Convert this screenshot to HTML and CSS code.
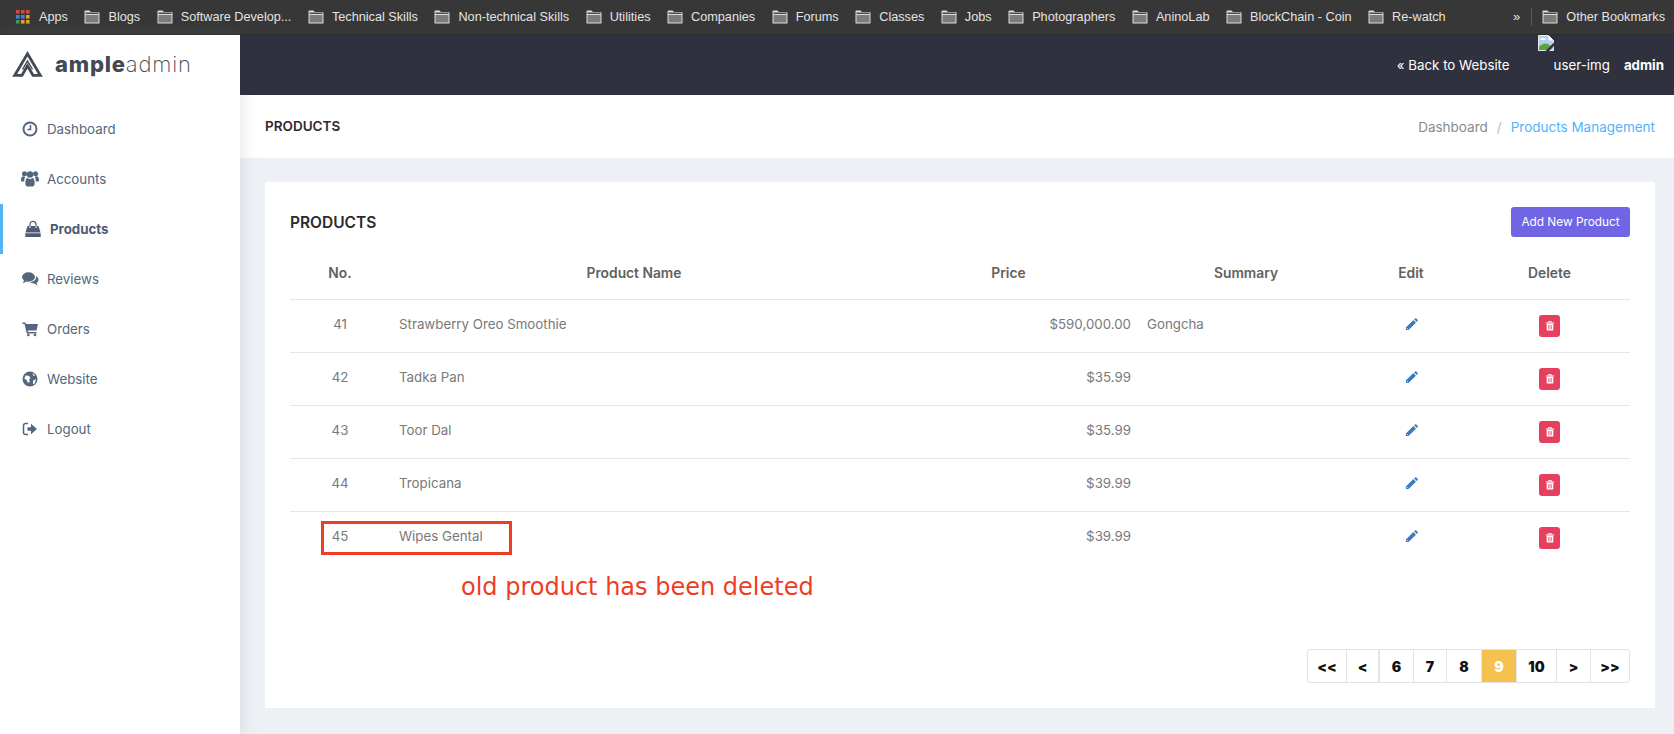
FILE: index.html
```html
<!DOCTYPE html>
<html lang="en">
<head>
  <meta charset="UTF-8">
  <title>Products Management</title>
  <link rel="stylesheet" href="styles.css">
</head>
<body>
  <svg class="sprites" width="0" height="0">
    <symbol id="folder" viewBox="0 0 16 14">
      <path d="M.5 13V1.5a1 1 0 0 1 1-1h4l1.5 1.5h7.500a1 1 0 0 1 1 1V13a.5.5 0 0 1-.5.5H1a.5.5 0 0 1-.5-.5z" fill="#dcdcdc"/>
      <rect x="1.500" y="5" width="13" height="7.500" fill="#7c7c7c"/>
      <rect x="1.500" y="2.500" width="13" height="1.500" fill="#4a4a4a"/>
    </symbol>
    <symbol id="pencil" viewBox="0 0 14 14">
      <path d="M1 10.200 9 2.200l2.800 2.800-8 8H1z" fill="currentColor"/>
      <path d="M9.800 1.400l.9-.9a1 1 0 0 1 1.400 0l1.400 1.400a1 1 0 0 1 0 1.400l-.9.900z" fill="currentColor"/>
      <path d="M2 10.800l1.200 1.200" stroke="#fff" stroke-width=".8"/>
    </symbol>
    <symbol id="trash" viewBox="0 0 12 13">
      <path d="M1 3h10v1H1zM4 3V1.600A.6.600 0 0 1 4.600 1h2.800a.6.600 0 0 1 .6.600V3H7V2H5v1z" fill="currentColor"/>
      <path d="M2 4.500h8V11.500a1 1 0 0 1-1 1H3a1 1 0 0 1-1-1z" fill="currentColor"/>
      <path d="M4.300 6v5M6 6v5M7.700 6v5" stroke="#e5405e" stroke-width=".8"/>
    </symbol>
  </svg>

  <div class="bookmarks">
    <a class="bm">
      <svg class="bm-apps" width="14" height="14" viewBox="0 0 14 14">
        <rect x="0" y="0" width="3.600" height="3.600" fill="#d9453a"/><rect x="5" y="0" width="3.600" height="3.600" fill="#d9453a"/><rect x="10" y="0" width="3.600" height="3.600" fill="#d9453a"/>
        <rect x="0" y="5" width="3.600" height="3.600" fill="#4a7fd8"/><rect x="5" y="5" width="3.600" height="3.600" fill="#4a7fd8"/><rect x="10" y="5" width="3.600" height="3.600" fill="#e0a030"/>
        <rect x="0" y="10" width="3.600" height="3.600" fill="#3f9a55"/><rect x="5" y="10" width="3.600" height="3.600" fill="#e0a030"/><rect x="10" y="10" width="3.600" height="3.600" fill="#e0a030"/>
      </svg>
      Apps
    </a>
    <a class="bm"><svg class="bm-folder"><use href="#folder"/></svg>Blogs</a>
    <a class="bm"><svg class="bm-folder"><use href="#folder"/></svg>Software Develop...</a>
    <a class="bm"><svg class="bm-folder"><use href="#folder"/></svg>Technical Skills</a>
    <a class="bm"><svg class="bm-folder"><use href="#folder"/></svg>Non-technical Skills</a>
    <a class="bm"><svg class="bm-folder"><use href="#folder"/></svg>Utilities</a>
    <a class="bm"><svg class="bm-folder"><use href="#folder"/></svg>Companies</a>
    <a class="bm"><svg class="bm-folder"><use href="#folder"/></svg>Forums</a>
    <a class="bm"><svg class="bm-folder"><use href="#folder"/></svg>Classes</a>
    <a class="bm"><svg class="bm-folder"><use href="#folder"/></svg>Jobs</a>
    <a class="bm"><svg class="bm-folder"><use href="#folder"/></svg>Photographers</a>
    <a class="bm"><svg class="bm-folder"><use href="#folder"/></svg>AninoLab</a>
    <a class="bm"><svg class="bm-folder"><use href="#folder"/></svg>BlockChain - Coin</a>
    <a class="bm"><svg class="bm-folder"><use href="#folder"/></svg>Re-watch</a>
    <span class="bm-more">»</span>
    <span class="bm-divider"></span>
    <a class="bm"><svg class="bm-folder"><use href="#folder"/></svg>Other Bookmarks</a>
  </div>

  <div class="layout">
    <aside class="sidebar">
      <div class="logo">
        <svg class="logo-mark" width="31" height="26" viewBox="0 0 31 26">
          <path d="M10 24.300H2.700L15.500 2.800l12.800 21.500H21l-5.500-9.500z" fill="none" stroke="#434a54" stroke-width="2.800" stroke-linejoin="miter"/>
          <path d="M10.500 18.500 15.500 10l5 8.500" fill="none" stroke="#434a54" stroke-width="1.400"/>
        </svg>
        <span class="logo-text"><b>ample</b>admin</span>
      </div>
      <nav class="nav">
        <a class="nav-item">
          <svg class="nav-icon" viewBox="0 0 18 18"><circle cx="9" cy="9" r="6.500" fill="none" stroke="currentColor" stroke-width="2"/><path d="M9.500 5v4.500H6.500" fill="none" stroke="currentColor" stroke-width="1.500"/></svg>
          Dashboard
        </a>
        <a class="nav-item">
          <svg class="nav-icon" viewBox="0 0 18 18"><circle cx="3.500" cy="3.800" r="2.500" fill="currentColor"/><circle cx="14.500" cy="3.800" r="2.500" fill="currentColor"/><circle cx="9" cy="4.500" r="3.200" fill="currentColor"/><path d="M0 10c0-2.500 1-3.700 2.500-3.700.7 0 1.200.2 1.700.6-.7 1.100-1 2.600-1 4.600H1c-.6 0-1-.5-1-1.500zM18 10c0-2.500-1-3.700-2.500-3.700-.7 0-1.200.2-1.700.6.700 1.100 1 2.600 1 4.600H17c.6 0 1-.5 1-1.500zM4.300 13.500c0-3.500 1-5.500 2.200-5.500 1.500 1.200 3.500 1.200 5 0 1.200 0 2.200 2 2.200 5.500 0 1.500-.8 3-2.200 3h-5c-1.400 0-2.200-1.500-2.200-3z" fill="currentColor"/></svg>
          Accounts
        </a>
        <a class="nav-item is-active">
          <svg class="nav-icon" viewBox="0 0 18 18"><path d="M3.500 6h11l2 6.500h-15zM1.300 13.300h15.400V17H1.300z" fill="currentColor"/><path d="M6 8V4.300a3 3 0 0 1 6 0V8" fill="none" stroke="currentColor" stroke-width="1.200"/><path d="M6 6.300V8M12 6.300V8" stroke="#fff" stroke-width="1.200"/></svg>
          Products
        </a>
        <a class="nav-item">
          <svg class="nav-icon" viewBox="0 0 18 18"><ellipse cx="7.500" cy="7" rx="6.500" ry="4.700" fill="currentColor"/><path d="M3 10 2 13.500l4-2.500z" fill="currentColor"/><path d="M15 6c1.500 1 2.500 2.200 2.500 3.700 0 1.300-.7 2.400-2 3.200l1.300 2.600-4-2.200c-1.500 0-3-.4-4-1.300 3.800 0 7-2.600 6.200-6z" fill="currentColor"/></svg>
          Reviews
        </a>
        <a class="nav-item">
          <svg class="nav-icon" viewBox="0 0 18 18"><path d="M1.500 2.500h3l.5 1.500h12l-1.500 6.500H6.800l.4 1.500h8.300v1.500H5.800L3.500 4H1.500z" fill="currentColor"/><circle cx="7.300" cy="15" r="1.300" fill="currentColor"/><circle cx="14" cy="15" r="1.300" fill="currentColor"/></svg>
          Orders
        </a>
        <a class="nav-item">
          <svg class="nav-icon" viewBox="0 0 18 18"><circle cx="9" cy="9" r="7.500" fill="currentColor"/><path d="M4.800 5.200 8 6l1.500 2-1.300 1.500.5 2.500-1.800.8L5.500 10 3.300 8.500zM11.500 2.800l2.700 2.400-1.700.8zM12 10.500l3-1.300-1 3.800-2 1.500z" fill="#fff"/></svg>
          Website
        </a>
        <a class="nav-item">
          <svg class="nav-icon" viewBox="0 0 18 18"><path d="M7 3.500H4.500A2 2 0 0 0 2.500 5.500v7a2 2 0 0 0 2 2H7" fill="none" stroke="currentColor" stroke-width="1.500"/><path d="M6.500 7.200H10V3.800l6 5.200-6 5.200v-3.400H6.500z" fill="currentColor"/></svg>
          Logout
        </a>
      </nav>
    </aside>

    <div class="main">
      <header class="topbar">
        <a class="topbar-link">« Back to Website</a>
        <span class="user">
          <svg class="broken-img" width="16" height="16" viewBox="0 0 16 16">
            <path d="M.5.500h10l5 5v10H.5z" fill="#b5cff2" stroke="#e8e8e8"/>
            <path d="M2 4.500c0-1 1-1.500 2-1 .5-1 2.500-1 3 .2.800 0 1 1 .5 1.300H3c-.6 0-1-.2-1-.5z" fill="#fff"/>
            <path d="M1 15v-3c2-3 6-4.500 9-3l3 2-3 4z" fill="#5fa33c"/>
            <path d="M10.500.500v5h5z" fill="#fff"/>
            <path d="M7.500 16 16 7.500V11l-5 5z" fill="#2f323e"/>
          </svg>
          <span class="user-alt">user-img</span>
          <b class="user-name">admin</b>
        </span>
      </header>

      <div class="pagebar">
        <h4 class="pagebar-title">PRODUCTS</h4>
        <div class="crumbs">
          <a class="crumb">Dashboard</a>
          <span class="crumb-sep">/</span>
          <a class="crumb crumb-current">Products Management</a>
        </div>
      </div>

      <div class="content">
        <section class="card">
          <div class="card-head">
            <h3 class="card-title">PRODUCTS</h3>
            <button class="btn-add">Add New Product</button>
          </div>
          <table class="products">
            <thead>
              <tr>
                <th class="col-no">No.</th>
                <th class="col-name">Product Name</th>
                <th class="col-price">Price</th>
                <th class="col-summary">Summary</th>
                <th class="col-edit">Edit</th>
                <th class="col-delete">Delete</th>
              </tr>
            </thead>
            <tbody>
              <tr>
                <td class="num">41</td><td class="name">Strawberry Oreo Smoothie</td><td class="price">$590,000.00</td><td>Gongcha</td>
                <td class="act"><svg class="edit-icon"><use href="#pencil"/></svg></td>
                <td class="act"><a class="btn-del"><svg class="del-icon"><use href="#trash"/></svg></a></td>
              </tr>
              <tr>
                <td class="num">42</td><td class="name">Tadka Pan</td><td class="price">$35.99</td><td></td>
                <td class="act"><svg class="edit-icon"><use href="#pencil"/></svg></td>
                <td class="act"><a class="btn-del"><svg class="del-icon"><use href="#trash"/></svg></a></td>
              </tr>
              <tr>
                <td class="num">43</td><td class="name">Toor Dal</td><td class="price">$35.99</td><td></td>
                <td class="act"><svg class="edit-icon"><use href="#pencil"/></svg></td>
                <td class="act"><a class="btn-del"><svg class="del-icon"><use href="#trash"/></svg></a></td>
              </tr>
              <tr>
                <td class="num">44</td><td class="name">Tropicana</td><td class="price">$39.99</td><td></td>
                <td class="act"><svg class="edit-icon"><use href="#pencil"/></svg></td>
                <td class="act"><a class="btn-del"><svg class="del-icon"><use href="#trash"/></svg></a></td>
              </tr>
              <tr>
                <td class="num">45</td><td class="name">Wipes Gental</td><td class="price">$39.99</td><td></td>
                <td class="act"><svg class="edit-icon"><use href="#pencil"/></svg></td>
                <td class="act"><a class="btn-del"><svg class="del-icon"><use href="#trash"/></svg></a></td>
              </tr>
            </tbody>
          </table>

          <div class="mark-box"></div>
          <div class="mark-note">old product has been deleted</div>

          <div class="pager">
            <a class="page w-39">&lt;&lt;</a>
            <a class="page w-33 page-gap">&lt;</a>
            <a class="page w-34">6</a>
            <a class="page w-33">7</a>
            <a class="page w-35">8</a>
            <a class="page w-35 is-current">9</a>
            <a class="page w-40">10</a>
            <a class="page w-34">&gt;</a>
            <a class="page w-38">&gt;&gt;</a>
          </div>
        </section>
      </div>
    </div>
  </div>
</body>
</html>
```

FILE: styles.css
```css
* {
  box-sizing: border-box;
}
html, body {
  margin: 0;
  height: 100%;
  overflow: hidden;
}
body {
  display: flex;
  flex-direction: column;
  font-family: Inter, "Noto Sans", sans-serif;
  font-size: 13.300px;
  color: #686868;
  background: #edf1f5;
}
.sprites {
  position: absolute;
}

/* browser bookmarks bar */
.bookmarks {
  flex: 0 0 35px;
  display: flex;
  align-items: center;
  gap: 16.500px;
  padding: 0 9px 1px 16px;
  background: #373737;
  border-bottom: 1px solid #2b2b2b;
  font-family: "Liberation Sans", Arial, sans-serif;
  font-size: 12.700px;
  color: #e4e4e4;
  white-space: nowrap;
}
.bm {
  display: flex;
  align-items: center;
  gap: 8px;
}
.bm-apps {
  margin-right: 1px;
}
.bm-folder {
  width: 16px;
  height: 14px;
}
.bm-more {
  margin-left: auto;
  font-size: 13px;
}
.bm-divider {
  width: 1px;
  height: 18px;
  margin: 0 -6px;
  background: #5a5a5a;
}

.layout {
  flex: 1;
  display: flex;
  min-height: 0;
}

/* sidebar */
.sidebar {
  flex: 0 0 240px;
  background: #fff;
  box-shadow: 1px 0 16px rgba(120, 130, 140, 0.22);
  z-index: 1;
}
.logo {
  height: 60px;
  display: flex;
  align-items: center;
  gap: 12px;
  padding: 0 0 2px 12px;
}
.logo-text {
  font-family: Inter, sans-serif;
  font-size: 22px;
  font-weight: 200;
  letter-spacing: 0.8px;
  color: #434a54;
}
.logo-text b {
  font-weight: 800;
}
.nav {
  padding-top: 9px;
}
.nav-item {
  height: 50px;
  display: flex;
  align-items: center;
  gap: 8px;
  padding-left: 21px;
  color: #54667a;
}
.nav-icon {
  width: 18px;
  height: 18px;
}
.nav-item.is-active {
  padding-left: 21px;
  border-left: 3px solid #53b3f9;
  font-weight: 700;
  color: #4f5b73;
}

.main {
  flex: 1;
  display: flex;
  flex-direction: column;
  min-width: 0;
}
.topbar {
  flex: 0 0 60px;
  display: flex;
  align-items: center;
  justify-content: flex-end;
  padding-right: 10px;
  background: #2f323e;
  color: #fff;
  position: relative;
  z-index: 2;
}
.topbar-link {
  margin-right: 28px;
}
.user {
  align-self: stretch;
  display: flex;
  align-items: center;
}
.broken-img {
  align-self: flex-start;
}
.user-alt {
  margin-right: 14px;
}
.user-name {
  font-weight: 700;
}

.pagebar {
  flex: 0 0 63px;
  display: flex;
  align-items: center;
  justify-content: space-between;
  padding: 0 19px 0 25px;
  background: #fff;
}
.pagebar-title {
  margin: 0 0 2px;
  font-size: 13.500px;
  font-weight: 600;
  color: #2b2b2b;
}
.crumbs {
  display: flex;
  gap: 9px;
  font-size: 13.500px;
  color: #8a8a8a;
}
.crumb-sep {
  color: #bbb;
}
.crumb-current {
  color: #53b3f9;
}

.content {
  flex: 1;
  padding: 24px 19px 26px 25px;
  min-height: 0;
  display: flex;
}
.card {
  flex: 1;
  position: relative;
  display: flex;
  flex-direction: column;
  padding: 25px;
  background: #fff;
}
.card-head {
  display: flex;
  align-items: center;
  justify-content: space-between;
}
.card-title {
  margin: 0;
  font-size: 15.500px;
  font-weight: 600;
  color: #2b2b2b;
}
.btn-add {
  height: 30px;
  width: 119px;
  padding: 0;
  border: none;
  border-radius: 3px;
  background: #7165e3;
  color: #fff;
  font: inherit;
  font-size: 11.800px;
}

/* table */
.products {
  width: 100%;
  border-collapse: collapse;
  table-layout: fixed;
}
.products th {
  height: 62px;
  padding: 10px 8px 0;
  border-bottom: 1px solid #e6e6e6;
  text-align: center;
  font-size: 13.800px;
  font-weight: 600;
  color: #616161;
}
.products td {
  height: 53px;
  padding: 0 8px 3px;
  border-bottom: 1px solid #e6e6e6;
  color: #797979;
}
.products tr:last-child td {
  border-bottom: none;
}
.col-no { width: 100px; }
.col-name { width: 488px; }
.col-price { width: 261px; }
.col-summary { width: 214px; }
.col-edit { width: 116px; }
.products .num {
  text-align: center;
}
.products .name {
  padding-left: 9px;
}
.products .act {
  padding: 0 8px;
  text-align: center;
}
.products .price {
  text-align: right;
}
.edit-icon {
  display: inline-block;
  width: 13px;
  height: 13px;
  margin-bottom: 3px;
  vertical-align: middle;
  color: #3c7ac0;
}
.btn-del {
  display: inline-flex;
  align-items: center;
  justify-content: center;
  width: 21px;
  height: 22px;
  border-radius: 3px;
  background: #e5405e;
  vertical-align: middle;
}
.del-icon {
  width: 10px;
  height: 11px;
  color: #fff;
}

/* red annotation added on top of the screenshot */
.mark-box {
  position: absolute;
  left: 56px;
  top: 339px;
  width: 191px;
  height: 34px;
  border: 3px solid #ee3d23;
}
.mark-note {
  position: absolute;
  left: 196px;
  top: 389px;
  font-family: "DejaVu Sans", Verdana, sans-serif;
  font-size: 24px;
  line-height: 32px;
  color: #ee3d23;
  white-space: nowrap;
}

/* pagination */
.pager {
  margin-top: auto;
  align-self: flex-end;
  display: flex;
  height: 34px;
  border: 1px solid #e4e4e4;
  border-radius: 3px;
}
.page {
  display: flex;
  align-items: center;
  justify-content: center;
  border-right: 1px solid #e4e4e4;
  font-size: 14px;
  font-weight: 900;
  color: #111;
}
.page:last-child {
  border-right: none;
}
.page-gap {
  border-right-width: 2px;
}
.page.is-current {
  background: #f6c24f;
  color: #fff;
}
.w-33 { width: 33px; }
.w-34 { width: 34px; }
.w-35 { width: 35px; }
.w-38 { width: 38px; }
.w-39 { width: 39px; }
.w-40 { width: 40px; }
```
